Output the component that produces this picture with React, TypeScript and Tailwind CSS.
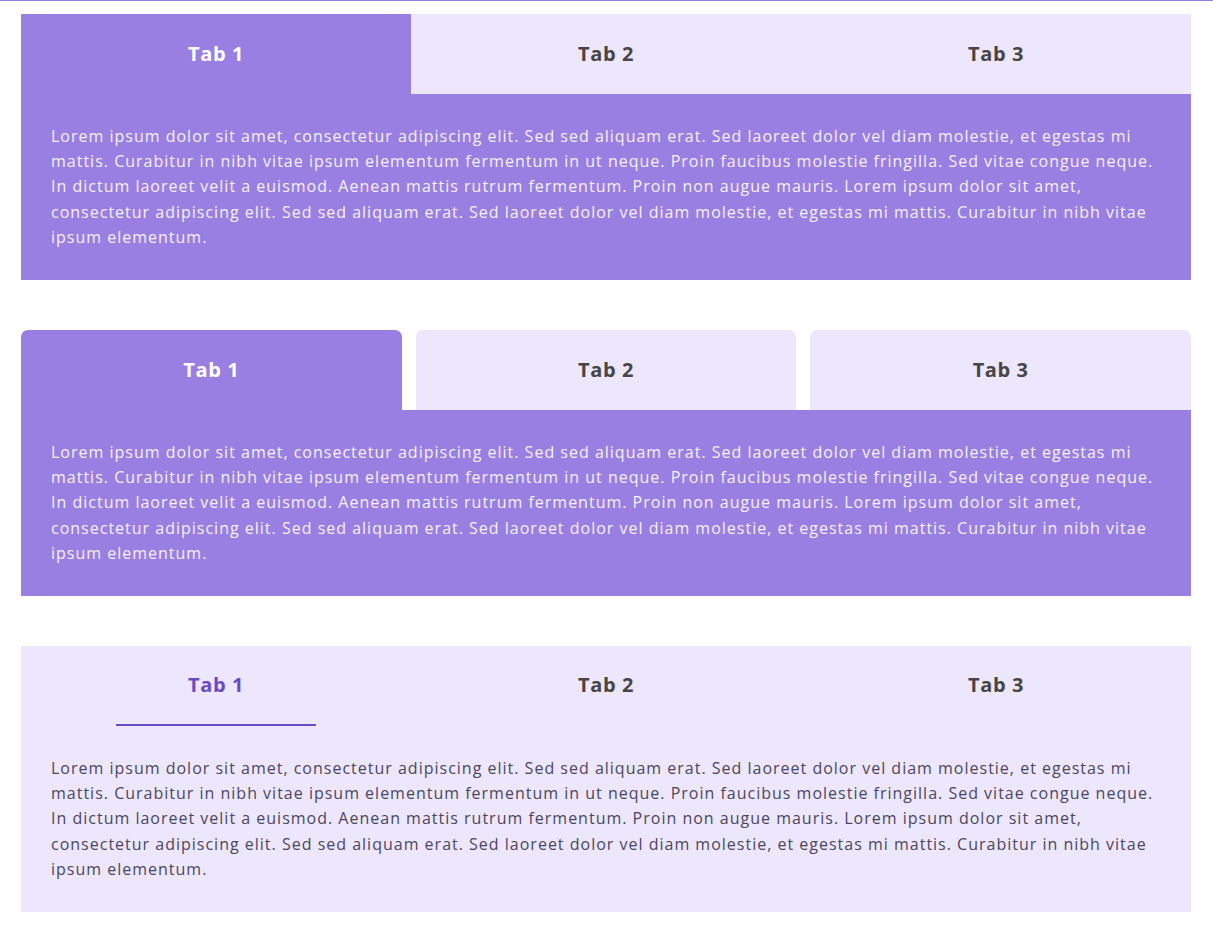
import React, { useState } from 'react';

const text =
  'Lorem ipsum dolor sit amet, consectetur adipiscing elit. Sed sed aliquam erat. Sed laoreet dolor vel diam molestie, et egestas mi mattis. Curabitur in nibh vitae ipsum elementum fermentum in ut neque. Proin faucibus molestie fringilla. Sed vitae congue neque. In dictum laoreet velit a euismod. Aenean mattis rutrum fermentum. Proin non augue mauris. Lorem ipsum dolor sit amet, consectetur adipiscing elit. Sed sed aliquam erat. Sed laoreet dolor vel diam molestie, et egestas mi mattis. Curabitur in nibh vitae ipsum elementum.';

const tabs = ['Tab 1', 'Tab 2', 'Tab 3'];

const FlatTabs = () => {
  const [active, setActive] = useState(0);
  return (
    <div>
      <div className="grid grid-cols-3">
        {tabs.map((t, i) => (
          <button
            key={t}
            onClick={() => setActive(i)}
            className={
              i === active
                ? 'h-20 bg-[#9a7fe2] text-white text-[20px] tracking-[0.6px] font-bold'
                : 'h-20 bg-[#ede7fe] text-[#474545] text-[20px] tracking-[0.6px] font-bold'
            }
          >
            {t}
          </button>
        ))}
      </div>
      <div className="bg-[#9a7fe2] px-[30px] pt-[30px] pb-[30px] text-[16px] tracking-[1px] leading-[25.2px] text-[#f5f1ff]">
        {text}
      </div>
    </div>
  );
};

const RoundTabs = () => {
  const [active, setActive] = useState(0);
  return (
    <div>
      <div className="grid grid-cols-3 gap-[14px]">
        {tabs.map((t, i) => (
          <button
            key={t}
            onClick={() => setActive(i)}
            className={
              i === active
                ? 'h-20 rounded-t-[7px] bg-[#9a7fe2] text-white text-[20px] tracking-[0.6px] font-bold'
                : 'h-20 rounded-t-[7px] bg-[#ede7fe] text-[#474545] text-[20px] tracking-[0.6px] font-bold'
            }
          >
            {t}
          </button>
        ))}
      </div>
      <div className="bg-[#9a7fe2] px-[30px] pt-[30px] pb-[30px] text-[16px] tracking-[1px] leading-[25.2px] text-[#f5f1ff]">
        {text}
      </div>
    </div>
  );
};

const LineTabs = () => {
  const [active, setActive] = useState(0);
  return (
    <div className="bg-[#ede7fe]">
      <div className="grid grid-cols-3">
        {tabs.map((t, i) => (
          <button
            key={t}
            onClick={() => setActive(i)}
            className="h-20 flex flex-col items-center justify-end"
          >
            <span
              className={
                i === active
                  ? 'flex-1 flex items-center text-[20px] tracking-[0.6px] font-bold text-[#6a4bc4]'
                  : 'flex-1 flex items-center text-[20px] tracking-[0.6px] font-bold text-[#474545]'
              }
            >
              {t}
            </span>
            <span className={i === active ? 'h-[2px] w-[200px] bg-[#6a4bc4]' : 'h-[2px] w-[200px]'} />
          </button>
        ))}
      </div>
      <div className="px-[30px] pt-[30px] pb-[30px] text-[16px] tracking-[1px] leading-[25.2px] text-[#4b4660]">
        {text}
      </div>
    </div>
  );
};

export default function App() {
  return (
    <div className="min-h-[931px] bg-white border-t border-[#9a7fe2] font-['Open_Sans',sans-serif]">
      <div className="pl-[21px] pt-[13px] pr-[22px] flex flex-col gap-[50px]">
        <FlatTabs />
        <RoundTabs />
        <LineTabs />
      </div>
    </div>
  );
}
